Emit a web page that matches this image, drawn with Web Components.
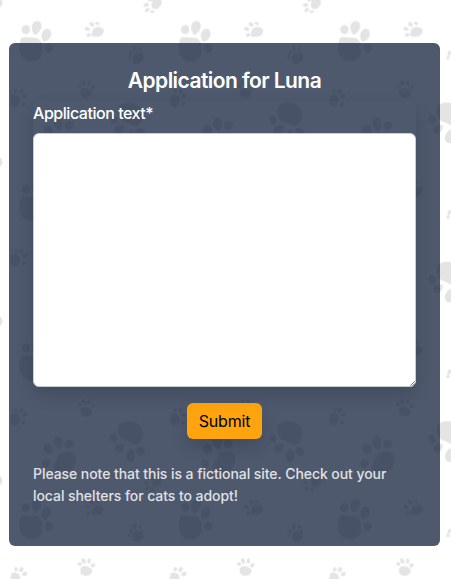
<!DOCTYPE html>
<html lang="en"><head><meta charset="utf-8"><title>Application for Luna</title>
<style>
html,body{margin:0;height:100%;overflow:hidden;background:#fff}
body{font-family:Inter,"Liberation Sans",sans-serif;color:#fff}
</style></head><body>
<paw-page>
  <application-card>
    <span slot="title">Application for Luna</span>
    <text-field>Application text*</text-field>
    <submit-button>Submit</submit-button>
    <span slot="note">Please note that this is a fictional site. Check out your local shelters for cats to adopt!</span>
  </application-card>
</paw-page>
<script>
class PawPage extends HTMLElement{
  constructor(){super();
    this.attachShadow({mode:'open'}).innerHTML=`<style>
:host{display:grid;height:579px;box-sizing:border-box;padding:43px 11px 33px 9px}
svg,.content{grid-area:1/1}
svg{width:451px;height:579px;margin:-43px 0 0 -9px}
.content{position:relative;display:grid;min-width:0}
</style>
<svg viewBox="0 0 1353 1737" fill="#e4e4e4" aria-hidden="true"><defs>
<pattern id="paws" width="478" height="478" patternUnits="userSpaceOnUse" patternTransform="translate(0 -294)">
<path d="M63 410C70 401 87 408 103 407C121 408 129 424 126 442C130 455 122 472 105 478C86 483 65 471 60 454C56 438 58 421 63 410Z"/>
<path d="M105 -2C101 0 96 1 88 -1Q96 3 105 -2Z"/>
<path d="M67 375C73 367 86 366 89 377C91 388 88 395 79 396C67 396 61 386 67 375Z"/>
<path d="M96 370C98 357 114 352 122 362C130 375 119 390 106 399C98 395 94 384 96 370Z"/>
<path d="M128 389C135 376 150 378 153 390C156 405 147 414 133 420C124 412 122 400 128 389Z"/>
<path d="M138 427C148 420 160 427 159 440C158 450 151 454 143 452C133 447 133 434 138 427Z"/>
<path d="M283 378C293 372 310 374 312 386C311 398 300 406 285 404C273 404 273 398 276 392Q276 382 283 378Z"/>
<ellipse cx="262" cy="381" rx="8.5" ry="5.5" transform="rotate(20 262 381)"/>
<ellipse cx="275" cy="367" rx="8" ry="6" transform="rotate(35 275 367)"/>
<ellipse cx="292" cy="364" rx="7" ry="4.5" transform="rotate(15 292 364)"/>
<ellipse cx="266" cy="399" rx="7" ry="5.5" transform="rotate(-15 266 399)"/>
<path d="M457 294C462 289 476 284 484 297C489 309 478 320 466 321C457 321 453 313 455 306Z"/>
<path d="M-16 289C-2 284 7 289 7 303C5 315 -5 320 -16 319Z"/>
<ellipse cx="439" cy="309" rx="8" ry="5.5" transform="rotate(-10 439 309)"/>
<ellipse cx="442" cy="324" rx="8" ry="5" transform="rotate(-35 442 324)"/>
<ellipse cx="457" cy="329" rx="7" ry="4"/>
<ellipse cx="450" cy="294" rx="6" ry="5"/>
<path d="M401 457C412 448 429 453 431 464C432 480 421 487 409 486C397 485 396 476 399 467Q397 461 401 457Z"/>
<path d="M397 0H424C419 10 402 12 397 0Z"/>
<ellipse cx="392" cy="454" rx="5" ry="8" transform="rotate(20 392 454)"/>
<ellipse cx="404" cy="439" rx="5.5" ry="9" transform="rotate(-10 404 439)"/>
<ellipse cx="420" cy="441" rx="5" ry="7" transform="rotate(25 420 441)"/>
<ellipse cx="426" cy="456" rx="5" ry="5.5"/>
<ellipse cx="388" cy="467" rx="5" ry="5"/>
<path d="M243 85C250 77 267 80 275 89C280 99 271 109 258 110C244 109 236 96 243 85Z"/>
<ellipse cx="239" cy="74" rx="6.5" ry="5" transform="rotate(25 239 74)"/>
<ellipse cx="251" cy="65" rx="6" ry="8.5" transform="rotate(-25 251 65)"/>
<ellipse cx="267" cy="65" rx="5" ry="8.5"/>
<ellipse cx="279" cy="78" rx="7" ry="5.5" transform="rotate(-35 279 78)"/>
<path d="M34 104C41 96 51 100 58 106C65 116 58 132 49 137C37 139 30 130 31 118Z"/>
<ellipse cx="48" cy="90" rx="5.5" ry="6" transform="rotate(25 48 90)"/>
<ellipse cx="64" cy="91" rx="6" ry="8" transform="rotate(35 64 91)"/>
<ellipse cx="74" cy="104" rx="8" ry="6" transform="rotate(-25 74 104)"/>
<ellipse cx="71" cy="128" rx="6" ry="6"/>
<path d="M358 133C372 120 398 121 414 132C431 143 432 164 425 180C417 196 401 197 390 188C379 181 364 182 358 168C355 157 350 143 358 133Z"/>
<ellipse cx="341" cy="175" rx="11" ry="14" transform="rotate(-20 341 175)"/>
<path d="M347 196C355 189 369 190 373 194C372 204 368 215 359 217C344 219 339 206 347 196Z"/>
<path d="M393 204C400 211 410 225 403 238C395 251 381 246 379 233C377 222 386 212 393 204Z"/>
<path d="M412 201C421 199 431 201 434 210C437 221 426 231 416 225C406 218 405 208 412 201Z"/>
<path d="M177 223C190 214 218 208 226 225C232 246 224 270 205 277C186 286 165 279 158 265C160 249 171 240 177 223Z"/>
<path d="M134 195C143 187 155 192 158 202C161 216 155 224 144 223C132 220 126 205 134 195Z"/>
<path d="M162 177C166 168 176 165 184 175C192 187 188 200 180 210C168 205 157 195 162 177Z"/>
<path d="M195 187C200 175 216 176 221 187C224 199 213 207 201 205C194 202 192 195 195 187Z"/>
<path d="M128 241C134 234 148 236 150 244C151 254 145 262 138 265C126 264 122 250 128 241Z"/>
</pattern></defs><rect width="1353" height="1737" fill="url(#paws)"/></svg><div class="content"><slot></slot></div>`}}
customElements.define('paw-page',PawPage);
class ApplicationCard extends HTMLElement{
  constructor(){super();
    this.attachShadow({mode:'open'}).innerHTML=`<style>
:host{display:flex;flex-direction:column;align-items:center;box-sizing:border-box;width:431px;height:503px;padding:24px 24px 0;border-radius:6px;background:rgba(18,32,61,.747)}
h1{margin:0;height:34px;line-height:27px;font-size:21px;font-weight:600;letter-spacing:-.56px;white-space:nowrap}
p{margin:24px 0 0;width:100%;font-size:14px;line-height:22px;font-weight:450;color:#e0e1e3;letter-spacing:-.065px}
</style><h1><slot name="title"></slot></h1><slot></slot><p><slot name="note"></slot></p>`}}
customElements.define('application-card',ApplicationCard);
class TextField extends HTMLElement{
  constructor(){super();
    this.attachShadow({mode:'open'}).innerHTML=`<style>
:host{position:relative;display:flex;flex-direction:column;width:383px;height:286px;box-shadow:0 8px 16px rgba(0,0,0,.15);border-radius:6px}
label{height:32px;line-height:24px;font-size:16px;font-weight:450;letter-spacing:-.46px}
textarea{box-sizing:border-box;width:100%;height:254px;margin:0;border:1px solid #c6cdd5;border-radius:6px;background:#fff;resize:none;outline:0;font:16px Inter,sans-serif}
.grip{position:absolute;right:1px;bottom:1px;width:5px;height:5px}
</style><label for="text"><slot></slot></label><textarea id="text"></textarea><svg class="grip" viewBox="0 0 5 5" fill="none" stroke="#555" stroke-width=".8" aria-hidden="true"><path d="M.3 4.7L4.7.3M2.7 4.7L4.7 2.7"/></svg>`}}
customElements.define('text-field',TextField);
class SubmitButton extends HTMLElement{
  constructor(){super();
    this.attachShadow({mode:'open'}).innerHTML=`<style>
:host{display:block;margin-top:16px}
button{display:block;width:75px;height:36px;padding:0;border:0;border-radius:6px;background:#ffa40f;color:#000;font:16px/36px Inter,sans-serif;letter-spacing:-.2px;box-shadow:0 8px 16px rgba(0,0,0,.15)}
</style><button type="button"><slot></slot></button>`}}
customElements.define('submit-button',SubmitButton);
</script></body></html>
